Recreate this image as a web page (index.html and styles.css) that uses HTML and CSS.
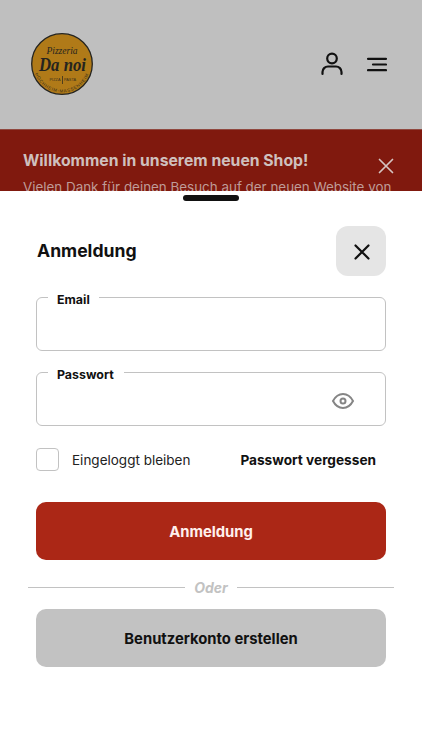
FILE: index.html
```html
<!DOCTYPE html>
<html lang="de">
<head>
<meta charset="utf-8">
<meta name="viewport" content="width=device-width, initial-scale=1">
<title>Pizzeria Da noi</title>
<link rel="stylesheet" href="styles.css">
</head>
<body>
<header class="top">
  <svg class="logo" viewBox="0 0 62 62" width="62" height="62">
    <circle cx="31" cy="31" r="30.3" fill="#b07a18" stroke="#25241f" stroke-width="1.3"/>
    <text class="logo-script thin" x="31" y="21" font-size="9.5" textLength="31">Pizzeria</text>
    <text class="logo-script" x="31.5" y="37.5" font-size="18" textLength="47" lengthAdjust="spacingAndGlyphs">Da noi</text>
    <text class="logo-caps" x="24" y="48.3" font-size="3.8" textLength="11">PIZZA</text>
    <text class="logo-caps" x="39" y="48.3" font-size="3.8" textLength="12">PASTA</text>
    <path d="M31.500 43v8" stroke="#25241f" stroke-width=".7"/>
    <path id="rim" d="M2.700 35A28.600 28.600 0 0 0 59.300 35" fill="none"/>
    <text class="logo-rim" font-size="4.4" letter-spacing=".75"><textPath href="#rim" startOffset="50%">HOCHHEIM-MASSENHEIM</textPath></text>
  </svg>
  <nav class="tools">
    <svg width="22" height="24" viewBox="0 0 22 24" class="ico"><circle cx="11" cy="6.5" r="4.8"/><path d="M1.500 22v-2a5.500 5.500 0 0 1 5.500-5.500h8A5.500 5.500 0 0 1 20.500 20v2"/></svg>
    <svg width="20" height="16" viewBox="0 0 20 16" class="ico"><path d="M1 2.800h18M6 8.500h13M1 14.200h18"/></svg>
  </nav>
</header>
<section class="banner">
  <div class="banner-text">
    <h2>Willkommen in unserem neuen Shop!</h2>
    <p>Vielen Dank für deinen Besuch auf der neuen Website von</p>
  </div>
  <svg class="banner-close" width="16" height="16" viewBox="0 0 16 16"><path d="M1.500 1.500l13 13M14.500 1.500l-13 13"/></svg>
</section>
<main class="sheet">
  <div class="handle"></div>
  <div class="head">
    <h1>Anmeldung</h1>
    <button class="close" aria-label="Schließen"><svg width="16" height="16" viewBox="0 0 16 16" class="ico"><path d="M1.500 1.500l13 13M14.500 1.500l-13 13"/></svg></button>
  </div>
  <fieldset class="field"><legend><span class="l-email">Email</span></legend></fieldset>
  <fieldset class="field"><legend><span class="l-pass">Passwort</span></legend>
    <svg class="eye" width="24" height="18" viewBox="0 0 24 18"><path d="M2 9C4.500 4.300 8 2 12 2s7.500 2.300 10 7c-2.500 4.700-6 7-10 7S4.500 13.700 2 9z"/><circle cx="12" cy="9" r="2.500"/></svg>
  </fieldset>
  <div class="options">
    <span class="check"></span>
    <span class="stay">Eingeloggt bleiben</span>
    <a class="forgot">Passwort vergessen</a>
  </div>
  <button class="btn primary">Anmeldung</button>
  <div class="or"><span>Oder</span></div>
  <button class="btn secondary">Benutzerkonto erstellen</button>
</main>
</body>
</html>
```

FILE: styles.css
```css
* { box-sizing: border-box; margin: 0; padding: 0; }
body { width: 422px; height: 750px; overflow: hidden; background: #fff; color: #111; font-family: Inter, "Liberation Sans", sans-serif; }
button { border: 0; font: inherit; color: inherit; display: flex; align-items: center; justify-content: center; }
.ico { fill: none; stroke: #111; stroke-width: 2.2; stroke-linecap: round; stroke-linejoin: round; }

.top { height: 129px; background: #bfbfbf; display: flex; align-items: center; justify-content: space-between; padding: 0 35px 1px 31px; }
.logo { display: block; }
.logo-script { font-family: "Liberation Serif", serif; font-style: italic; font-weight: bold; fill: #25241f; text-anchor: middle; }
.logo-script.thin { font-weight: normal; }
.logo-caps { font-family: "Liberation Sans", sans-serif; fill: #3a301c; text-anchor: middle; }
.logo-rim { font-family: "Liberation Sans", sans-serif; fill: #3a301c; text-anchor: middle; }
.tools { display: flex; align-items: center; gap: 24px; }

.banner { height: 62px; overflow: hidden; background: #80190e; border-top: 1px solid #90483f; color: #cfc0be; display: flex; justify-content: space-between; padding: 20px 28px 0 23px; }
.banner-text { white-space: nowrap; min-width: 0; }
.banner h2 { font-size: 15.75px; line-height: 22px; font-weight: 700; }
.banner p { font-size: 13.4px; line-height: 20px; margin-top: 5px; color: #bf9c98; }
.banner-close { margin-top: 8px; flex: none; fill: none; stroke: #d5c4c2; stroke-width: 1.7; stroke-linecap: round; }

.sheet { height: 559px; background: #fff; padding: 4px 36px 0; }
.handle { width: 56px; height: 6px; border-radius: 3px; background: #111; margin: 0 auto; }
.head { display: flex; align-items: center; justify-content: space-between; margin-top: 25px; height: 50px; }
h1 { font-size: 17.6px; line-height: 24px; font-weight: 700; margin-left: 1px; }
.close { width: 50px; height: 50px; border-radius: 12px; background: #e5e5e5; padding: 1px 0 0 1px; }

.field { height: 62px; margin-top: 13px; border: 1px solid #c2c2c2; border-radius: 6px; padding: 0 30px 0 0; min-width: 0; }
.field legend { margin-left: 11px; padding: 0 9px; height: 16px; font-size: 12.4px; line-height: 21px; font-weight: 700; }
.field legend span { display: block; white-space: nowrap; }
.l-email { width: 33px; }
.l-pass { width: 58px; }
.eye { display: block; margin: 12px 0 0 auto; fill: none; stroke: #858585; stroke-width: 2; }

.options { display: flex; align-items: center; margin-top: 21px; height: 24px; padding-right: 10px; font-size: 13.5px; }
.check { width: 23px; height: 23px; border: 1px solid #c2c2c2; border-radius: 4px; }
.stay { margin-left: 13px; color: #222; padding-top: 1px; }
.forgot { margin-left: auto; font-weight: 700; font-size: 13.65px; padding-top: 1px; }
.btn { width: 350px; height: 58px; border-radius: 10px; font-weight: 700; font-size: 14.8px; padding-top: 2px; }
.primary { margin-top: 31px; background: #ab2716; color: #fff0ed; }
.or { height: 20px; margin: 17px -8px 12px; display: flex; align-items: center; gap: 9px; color: #c2c2c2; font-size: 14px; font-weight: 700; font-style: italic; }
.or::before, .or::after { content: ""; flex: 1; height: 1px; background: #c2c2c2; }
.secondary { background: #c2c2c2; color: #111; }
```
